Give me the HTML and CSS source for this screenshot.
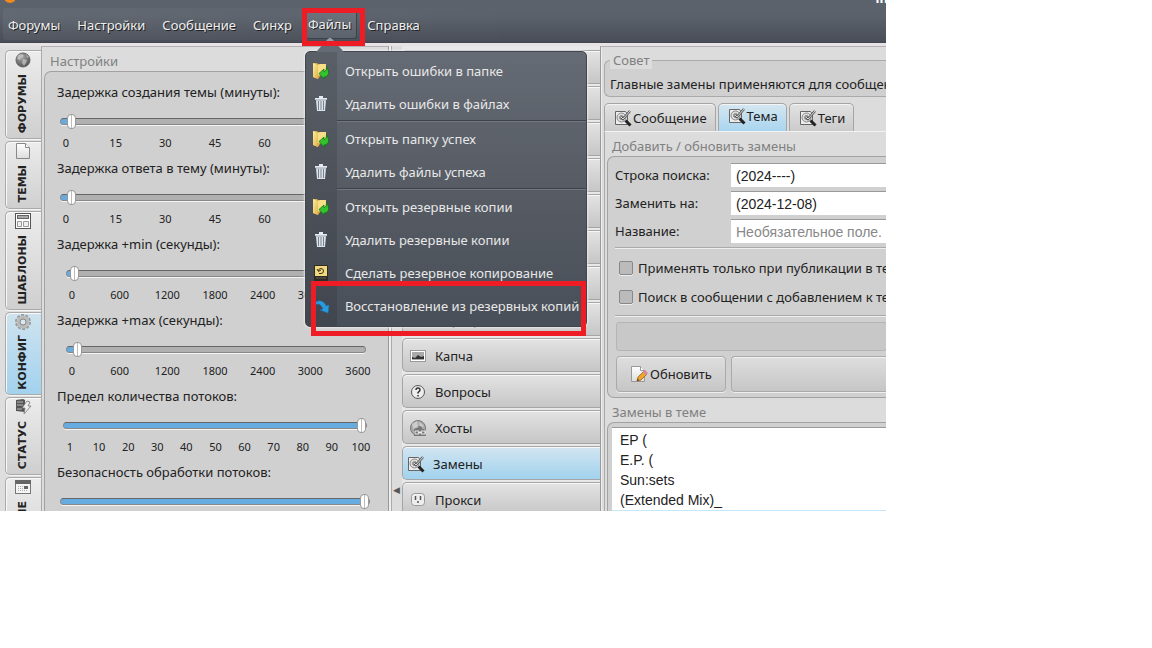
FILE: index.html
```html
<!DOCTYPE html>
<html lang="ru">
<head>
<meta charset="utf-8">
<title>Замены</title>
<link rel="stylesheet" href="styles.css">
</head>
<body>
<svg class="defs" aria-hidden="true">
  <defs>
    <linearGradient id="gold" x1="0" y1="0" x2="1" y2="1"><stop offset="0" stop-color="#ffef9e"/><stop offset="1" stop-color="#dcae45"/></linearGradient>
    <radialGradient id="ball" cx="0.4" cy="0.3" r="0.7"><stop offset="0" stop-color="#aaa"/><stop offset="1" stop-color="#555"/></radialGradient>
    <linearGradient id="paper" x1="0" y1="0" x2="0" y2="1"><stop offset="0" stop-color="#fff"/><stop offset="1" stop-color="#ddd"/></linearGradient>
    <symbol id="folder" viewBox="0 0 18 18">
      <path d="M1 1h4l1 1h8v11l-6 1-2 3-5-2z" fill="#d9ab47"/><path d="M6 3l2-1h6v11H6z" fill="#f7df87"/><path d="M1 1l5 2v14l-5-2z" fill="url(#gold)"/>
      <path d="M7 11.500l5-4.500v2.500q2.500 0 2.500-5 4 7 .5 9.500-1 1-3 1V17z" fill="#35c22f" stroke="#0b7410" stroke-width=".8"/>
    </symbol>
    <symbol id="trash" viewBox="0 0 18 18">
      <path d="M7 1h4v2H7zM3 3h12v2H3z" fill="#e6ebf2"/><path d="M4 5h10l-1 11H5z" fill="#dce2eb"/><path d="M6.500 6v9M9 6v9M11.500 6v9" stroke="#79828f"/><path d="M3 5h12" stroke="#7d8591" stroke-width=".7"/>
    </symbol>
    <symbol id="drive" viewBox="0 0 18 18">
      <rect x="2" y="1" width="14" height="16" rx="1" fill="#2e2c26"/><rect x="3" y="2" width="12" height="10" fill="#f2d97e"/><path d="M7 9.500h2A2.500 2.500 0 1 0 6.500 7M5 5l1.500 2.500L9 6" fill="none" stroke="#3e3517"/><path d="M4 14h10" stroke="#625f57"/>
    </symbol>
    <symbol id="restore" viewBox="0 0 18 18">
      <path d="M1 9Q4 3 9 4q4 1 5 5l3-1-1 8-8-3 3-1Q9 7 6 7 3 7 1 9z" fill="#2b9bdf" stroke="#1877b7" stroke-width=".6"/>
    </symbol>
    <symbol id="globe" viewBox="0 0 18 18">
      <circle cx="9" cy="9" r="7" fill="url(#ball)" stroke="#666"/><path d="M4 4l4-1 2 2-3 2-1 2-3-1zM9 8l4 1-1 3-2 3-2-3zM12 3l3 3-2 1z" fill="#d5d5d5" opacity=".6"/>
    </symbol>
    <symbol id="page" viewBox="0 0 18 18">
      <path d="M2.500 1.500h9l4 4v11h-13z" fill="url(#paper)" stroke="#888"/><path d="M11.500 1.500v4h4" fill="#fff" stroke="#888"/>
    </symbol>
    <symbol id="template" viewBox="0 0 18 18">
      <rect x="1.500" y="1.500" width="15" height="15" fill="#fff" stroke="#555"/><rect x="3.500" y="3.500" width="11" height="3" fill="#aaa" stroke="#666"/><path d="M3.500 9.500h4v5h-4zM9.500 9.500h5v5h-5z" fill="#eee" stroke="#999"/>
    </symbol>
    <symbol id="gear" viewBox="0 0 18 18">
      <circle cx="9" cy="9" r="7" fill="none" stroke="#999" stroke-width="2" stroke-dasharray="3 1.400"/><circle cx="9" cy="9" r="4.500" fill="#d8e7f0" stroke="#bbb" stroke-width="4"/><circle cx="9" cy="9" r="3" fill="#d8e7f0" stroke="#888"/>
    </symbol>
    <symbol id="status" viewBox="0 0 18 18">
      <path d="M2 2l7-1 2 1v12l-9-1z" fill="#555"/><path d="M3 4h6M3 7h6M3 11h5" stroke="#bbb"/><path d="M13 3l3 1-2 4h3l-7 8 1-6H8z" fill="#eee" stroke="#777" stroke-width=".8"/>
    </symbol>
    <symbol id="calendar" viewBox="0 0 18 18">
      <rect x="1.500" y="2.500" width="15" height="13" fill="#f5f5f5" stroke="#777"/><path d="M1 2h16v4H1z" fill="#666"/><path d="M4 8.500h10M4 10.500h10M4 12.500h10" stroke="#aaa" stroke-dasharray="1 1"/><path d="M10 8h4v3h-4z" fill="#666"/>
    </symbol>
    <symbol id="image" viewBox="0 0 18 18">
      <rect x="1.500" y="3.500" width="15" height="11" fill="#fff" stroke="#999"/><path d="M3 5h12v8H3z" fill="#aaa"/><path d="M3 12v-2l3 1 3-3 3 2 3-1v3z" fill="#333"/>
    </symbol>
    <symbol id="question" viewBox="0 0 18 18">
      <circle cx="9" cy="9" r="6.500" fill="#eee" stroke="#555"/><path d="M7 7q0-2 2-2t2 2q0 1-2 2.500v1M9 12v1.500" fill="none" stroke="#333" stroke-width="1.500"/>
    </symbol>
    <symbol id="hosts" viewBox="0 0 18 18">
      <circle cx="9" cy="9" r="7.500" fill="#aaa" stroke="#777"/><path d="M3 5l5-3 1 5-4 4zM10 3l5 4-4 2z" fill="#ccc"/><path d="M5 11q0-2 2-2h2q0-2 2-2t2 3h2l2 7H5z" fill="#777"/><path d="M6 12h4v3H6zM12 12h4v3h-4zM9 13.500h4" fill="none" stroke="#eee"/>
    </symbol>
    <symbol id="replace" viewBox="0 0 18 18">
      <path d="M1.500 2.500h10l2 3v10h-12z" fill="#ededed" stroke="#666"/><circle cx="7.500" cy="8.500" r="4.500" fill="#ddd" stroke="#888"/><circle cx="7.500" cy="8.500" r="2" fill="#bbb" stroke="#888"/><path d="M7 8l2 2 7-8" fill="none" stroke="#555" stroke-width="2.500"/><path d="M7 8l2 2 7-8" fill="none" stroke="#ddd"/><path d="M11.500 11.500l5 5" stroke="#222" stroke-width="3"/>
    </symbol>
    <symbol id="proxy" viewBox="0 0 18 18">
      <rect x="2.500" y="2.500" width="13" height="12" rx="3" fill="#eee" stroke="#999"/><path d="M6.500 5v4M11.500 5v4M9 10v2" stroke="#555" stroke-width="1.500"/>
    </symbol>
    <symbol id="edit" viewBox="0 0 18 18">
      <path d="M1.500 1.500h9l4 4v11h-13z" fill="url(#paper)" stroke="#999"/><path d="M10.500 1.500v4h4" fill="#fff" stroke="#999"/><path d="M7 16l1-4 6-6 3 3-6 6z" fill="#f0a52c" stroke="#93601a" stroke-width=".8"/><path d="M13 7l2-2 3 3-2 2z" fill="#d285ae"/><path d="M7 16l1-2 1 1z" fill="#222"/>
    </symbol>
  </defs>
</svg>
<div class="screen">
  <div class="app">
    <header class="topbar">
      <svg class="logo" viewBox="0 0 12 12"><circle cx="6" cy="6" r="6" fill="#f28a1b"/></svg>
      <span class="caption">im</span>
      <nav class="menubar">
        <button class="menu-btn">Форумы</button>
        <button class="menu-btn">Настройки</button>
        <button class="menu-btn">Сообщение</button>
        <button class="menu-btn">Синхр</button>
        <div class="menu-open">
          <button class="menu-btn is-open" aria-expanded="true">Файлы</button>
          <div class="mark mark-menu"></div>
          <div class="dropdown">
            <svg class="notch" viewBox="0 0 28 14"><path d="M0 14L12 1q2-2 4 0l12 13z" fill="#656b74"/><path d="M9 4l3-3q2-2 4 0l3 3z" fill="#9a9fa6"/></svg>
            <div class="dd-group">
              <button class="dd-item"><svg class="icon"><use href="#folder"/></svg>Открыть ошибки в папке</button>
              <button class="dd-item"><svg class="icon"><use href="#trash"/></svg>Удалить ошибки в файлах</button>
            </div>
            <div class="dd-group">
              <button class="dd-item"><svg class="icon"><use href="#folder"/></svg>Открыть папку успех</button>
              <button class="dd-item"><svg class="icon"><use href="#trash"/></svg>Удалить файлы успеха</button>
            </div>
            <div class="dd-group">
              <button class="dd-item"><svg class="icon"><use href="#folder"/></svg>Открыть резервные копии</button>
              <button class="dd-item"><svg class="icon"><use href="#trash"/></svg>Удалить резервные копии</button>
              <button class="dd-item"><svg class="icon"><use href="#drive"/></svg>Сделать резервное копирование</button>
              <button class="dd-item"><svg class="icon"><use href="#restore"/></svg>Восстановление из резервных копий</button>
            </div>
            <div class="mark mark-item"></div>
          </div>
        </div>
        <button class="menu-btn">Справка</button>
      </nav>
    </header>

    <main class="workspace">
      <nav class="rail">
        <button class="rail-tab"><svg class="icon"><use href="#globe"/></svg><span>ФОРУМЫ</span></button>
        <button class="rail-tab"><svg class="icon"><use href="#page"/></svg><span>ТЕМЫ</span></button>
        <button class="rail-tab"><svg class="icon"><use href="#template"/></svg><span>ШАБЛОНЫ</span></button>
        <button class="rail-tab is-active"><svg class="icon"><use href="#gear"/></svg><span>КОНФИГ</span></button>
        <button class="rail-tab"><svg class="icon"><use href="#status"/></svg><span>СТАТУС</span></button>
        <button class="rail-tab"><svg class="icon"><use href="#calendar"/></svg><span>ПРОЧИЕ</span></button>
      </nav>

      <section class="settings">
        <h2 class="title">Настройки</h2>
        <div class="group settings-group">
          <div class="setting short">
            <label for="s1">Задержка создания темы (минуты):</label>
            <input class="slider" id="s1" type="range" min="0" max="100" value="2" style="--fill:3%">
            <div class="ticks"><span>0</span><span>15</span><span>30</span><span>45</span><span>60</span><span>75</span><span>90</span></div>
          </div>
          <div class="setting short">
            <label for="s2">Задержка ответа в тему (минуты):</label>
            <input class="slider" id="s2" type="range" min="0" max="100" value="2" style="--fill:3%">
            <div class="ticks"><span>0</span><span>15</span><span>30</span><span>45</span><span>60</span><span>75</span><span>90</span></div>
          </div>
          <div class="setting wide">
            <label for="s3">Задержка +min (секунды):</label>
            <input class="slider" id="s3" type="range" min="0" max="100" value="1" style="--fill:2%">
            <div class="ticks"><span>0</span><span>600</span><span>1200</span><span>1800</span><span>2400</span><span>3000</span><span>3600</span></div>
          </div>
          <div class="setting wide">
            <label for="s4">Задержка +max (секунды):</label>
            <input class="slider" id="s4" type="range" min="0" max="100" value="2" style="--fill:3%">
            <div class="ticks"><span>0</span><span>600</span><span>1200</span><span>1800</span><span>2400</span><span>3000</span><span>3600</span></div>
          </div>
          <div class="setting limit">
            <label for="s5">Предел количества потоков:</label>
            <input class="slider" id="s5" type="range" min="0" max="100" value="100" style="--fill:99%">
            <div class="ticks"><span>1</span><span>10</span><span>20</span><span>30</span><span>40</span><span>50</span><span>60</span><span>70</span><span>80</span><span>90</span><span>100</span></div>
          </div>
          <div class="setting short">
            <label for="s6">Безопасность обработки потоков:</label>
            <input class="slider" id="s6" type="range" min="0" max="100" value="100" style="--fill:99%">
          </div>
        </div>
      </section>

      <div class="splitter"><span>◀</span></div>

      <nav class="sections">
        <button class="section-btn"></button>
        <button class="section-btn"></button>
        <button class="section-btn"></button>
        <button class="section-btn"></button>
        <button class="section-btn"></button>
        <button class="section-btn"></button>
        <button class="section-btn"></button>
        <button class="section-btn"><svg class="icon"><use href="#image"/></svg>Парсер</button>
        <button class="section-btn"><svg class="icon"><use href="#image"/></svg>Капча</button>
        <button class="section-btn"><svg class="icon"><use href="#question"/></svg>Вопросы</button>
        <button class="section-btn"><svg class="icon"><use href="#hosts"/></svg>Хосты</button>
        <button class="section-btn is-active"><svg class="icon"><use href="#replace"/></svg>Замены</button>
        <button class="section-btn"><svg class="icon"><use href="#proxy"/></svg>Прокси</button>
      </nav>

      <section class="details">
        <fieldset class="tip">
          <legend>Совет</legend>
          <p>Главные замены применяются для сообщений</p>
        </fieldset>
        <div class="tabs" role="tablist">
          <button class="tab" role="tab"><svg class="icon"><use href="#replace"/></svg>Сообщение</button>
          <button class="tab is-active" role="tab" aria-selected="true"><svg class="icon"><use href="#replace"/></svg>Тема</button>
          <button class="tab" role="tab"><svg class="icon"><use href="#replace"/></svg>Теги</button>
        </div>
        <div class="tab-page">
          <h2 class="title">Добавить / обновить замены</h2>
          <div class="group form">
            <div class="field"><label for="f1">Строка поиска:</label><input id="f1" type="text" value="(2024----)"></div>
            <div class="field"><label for="f2">Заменить на:</label><input id="f2" type="text" value="(2024-12-08)"></div>
            <div class="field"><label for="f3">Название:</label><input id="f3" type="text" placeholder="Необязательное поле."></div>
            <div class="checks">
              <label class="check"><input type="checkbox">Применять только при публикации в теме</label>
              <label class="check"><input type="checkbox">Поиск в сообщении с добавлением к теме</label>
            </div>
            <button class="blank" disabled aria-label="Добавить"></button>
            <div class="actions">
              <button class="push"><svg class="icon"><use href="#edit"/></svg>Обновить</button>
              <button class="push grow" aria-label="Удалить"></button>
            </div>
          </div>
          <h2 class="title">Замены в теме</h2>
          <div class="group list-group">
            <ul class="list"><li>EP (</li><li>E.P. (</li><li>Sun:sets</li><li>(Extended Mix)_</li><li class="is-selected">&nbsp;</li></ul>
          </div>
        </div>
      </section>
    </main>
  </div>
</div>
</body>
</html>
```
FILE: styles.css
```css
* { box-sizing: border-box; }
body {
  margin: 0;
  background: #fff;
  color: #222;
  font: 13px/20px "Noto Sans", "Open Sans", sans-serif;
}
button, input { font: inherit; color: inherit; }
button { border: 0; padding: 0; background: none; text-align: left; white-space: nowrap; }
h2, p, ul { margin: 0; padding: 0; font-size: inherit; font-weight: normal; }
.defs { position: absolute; width: 0; height: 0; }
.icon { width: 18px; height: 18px; flex: none; }

.screen {
  display: grid;
  grid-template: minmax(0, 56fr) 15fr / minmax(0, 10fr) 3fr;
  height: 100vh;
}
.app { position: relative; display: flex; flex-direction: column; overflow: hidden; background: #dcdcdc; }

/* top bar */
.topbar {
  flex: none;
  padding: 8px 3px 2px;
  background: linear-gradient(#5c636d, #5b616b 40%, #484d57);
  border-bottom: 1px solid #41454e;
  position: relative;
  z-index: 2;
}
.logo { position: absolute; left: 4px; top: -9px; width: 12px; height: 12px; }
.caption { position: absolute; right: -6px; top: -12px; color: #fff; font-weight: bold; }
.menubar { display: flex; height: 32px; background: linear-gradient(90deg, #ffffff0c, #ffffff00 60%); border-radius: 3px; }
.menu-btn { height: 32px; padding: 2px 5px 0; margin-right: 7px; color: #eee; text-shadow: 1px 1px 0 #222; }
.menu-open { position: relative; }
.menu-btn.is-open { height: 31px; padding-left: 4px; margin-right: 5px; background: linear-gradient(#70767f, #5c626b); border-right: 1px solid #3d424a; border-bottom: 1px solid #3d424a; border-radius: 3px; }
.mark { position: absolute; border: 5px solid #ee1c24; pointer-events: none; }
.mark-menu { left: -2px; right: -3px; top: 0; height: 38px; z-index: 2; }
.dropdown {
  position: absolute;
  left: 1px;
  top: 43px;
  width: 282px;
  padding: 2px 0 4px;
  border: 1px solid #42474f;
  border-radius: 5px;
  background: linear-gradient(90deg, #0000001c 31px, transparent 31px), linear-gradient(#656b74, #565b64 50%, #494f58);
  box-shadow: 0 0 2px 1px #eeec;
}
.notch { position: absolute; left: 10px; top: -14px; width: 28px; height: 14px; }
.dd-group + .dd-group { margin-left: 31px; border-top: 1px solid #3e434b; box-shadow: inset 0 1px #72777e; padding-top: 1px; }
.dd-group + .dd-group .dd-item { margin-left: -31px; }
.dd-item { display: flex; align-items: center; gap: 15px; height: 33px; padding-left: 6px; color: #e8e8e8; }
.mark-item { left: 5px; right: 0; top: 229px; height: 55px; }

/* body */
.workspace { flex: 1; min-height: 0; display: flex; border-top: 3px solid #e6e2e6; background: #dcdcdc; }
.rail { width: 41px; flex: none; display: flex; flex-direction: column; gap: 2px; padding: 4px 0 0 5px; background: #dedede; }
.rail-tab {
  flex: none;
  display: flex;
  flex-direction: column;
  align-items: center;
  gap: 5px;
  padding: 0 2px 5px 0;
  border: 1px solid #aaa;
  border-right: 0;
  border-radius: 5px 0 0 5px;
  background: linear-gradient(#ececec, #cfcfcf);
  font: bold 11px/14px "DejaVu Sans", sans-serif;
  box-shadow: inset 1px 1px #f8f8f8, 0 1px #f4f4f4;
}
.rail-tab span { writing-mode: vertical-rl; transform: rotate(180deg); }
.rail-tab.is-active { gap: 4px; padding-bottom: 4px; background: linear-gradient(#cfe3ef, #a3d2ee); }

.settings { flex: 0 0 347px; padding: 4px 0 0 2px; border-left: 1px solid #aaa; border-top: 1px solid #b5b0b5; background: #dcdcdc; }
.title { padding-left: 6px; color: #808080; }
.group { border: 1px solid #a2a2a2; border-radius: 7px; background: #d0d0d0; }
.settings-group { border-right: 0; border-radius: 7px 0 0 0; padding: 10px 0 0 12px; }
.setting { height: 76px; }
.setting label { display: block; }
.slider {
  appearance: none;
  display: block;
  height: 7px;
  margin: 16px 0 0 3px;
  width: 310px;
  border: 1px solid #888;
  border-top-color: #666;
  border-radius: 4px;
  background: linear-gradient(90deg, #66ace0 var(--fill), #b0b0b0 var(--fill));
  box-shadow: 0 1px #f4f4f4;
}
.slider::-webkit-slider-thumb {
  appearance: none;
  width: 9px;
  height: 15px;
  border: 1px solid #999;
  border-radius: 4px;
  background: linear-gradient(90deg, #fff 3px, #bbb 3px, #bbb 4px, #fff 4px);
}
.wide .slider { margin-left: 9px; width: 300px; }
.limit .slider { margin-left: 6px; width: 304px; }
.ticks { display: flex; justify-content: space-between; padding-top: 8px; font-size: 11px; line-height: 20px; }
.ticks span { width: 0; display: flex; justify-content: center; }
.short .ticks { margin: 0 24px 0 9px; }
.wide .ticks { margin: 0 30px 0 15px; }
.limit .ticks { margin: 0 27px 0 13px; }

.splitter { flex: none; width: 14px; padding: 438px 0 0 4px; border-left: 1px solid #999; box-shadow: inset 2px 0 #eee, inset 3px 0 #aaa; background: #dcdcdc; font: 9px/12px "DejaVu Sans", sans-serif; color: #555; }

.sections { flex: none; width: 198px; display: flex; flex-direction: column; gap: 2px; padding-top: 4px; background: #e8e8e8; }
.section-btn {
  flex: none;
  display: flex;
  align-items: center;
  gap: 8px;
  height: 34px;
  padding: 1px 0 0 6px;
  border: 1px solid #a5a5a5;
  border-right: 0;
  border-radius: 5px 0 0 5px;
  background: linear-gradient(#e3e3e3, #c6c6c6);
  box-shadow: inset 0 1px #f8f8f8;
}
.section-btn.is-active { padding-left: 4px; background: linear-gradient(#d2e5f0, #a2d2ee); }

.details { flex: 1; min-width: 0; padding: 4px 0 0 3px; border-left: 1px solid #999; border-top: 1px solid #b5b0b5; box-shadow: inset 1px 0 #eee; white-space: nowrap; overflow: hidden; }
.tip { min-width: 0; margin: 0; height: 46px; padding: 6px 0 0 5px; border: 1px solid #aaa; border-right: 0; border-radius: 6px 0 0 6px; background: #d0d0d0; }
.tip legend { height: 18px; line-height: 18px; padding: 0 3px; color: #808080; background: #dcdcdc; }
.tip p { line-height: 18px; }
.tabs { display: flex; align-items: flex-end; gap: 2px; height: 34px; padding-top: 6px; }
.tab { display: flex; align-items: center; gap: 1px; height: 28px; padding: 1px 8px 0 9px; border: 1px solid #a5a5a5; border-bottom: 0; border-radius: 5px 5px 0 0; background: linear-gradient(#e2e2e2, #cbcbcb); box-shadow: inset 0 1px #f4f4f4; }
.tab.is-active { padding: 0 8px 3px 9px; background: linear-gradient(#d5e7f1, #a9d5ef); }
.tab-page { border-top: 1px solid #f2f2f2; border-left: 1px solid #aaa; padding: 4px 0 0 2px; }
.tab-page .title { padding-left: 5px; }
.form { border-right: 0; border-radius: 7px 0 0 7px; padding: 6px 0 5px 7px; margin-bottom: 4px; }
.field { display: flex; align-items: center; padding-bottom: 4px; }
.field label { flex: 0 0 116px; }
.field input { flex: 1; min-width: 0; height: 24px; padding: 0 5px; border: 0; border-top: 1px solid #999; background: #fff; color: #222; font: 14px/22px "Liberation Sans", Arial, sans-serif; }
.field input::placeholder { color: #888; opacity: 1; }
.checks { display: flex; flex-direction: column; gap: 9px; padding: 10px 0 8px 4px; border-top: 1px solid #aaa; border-bottom: 1px solid #aaa; box-shadow: inset 0 1px #eee, 0 1px #eee; }
.check { display: flex; align-items: center; gap: 5px; }
.check input { appearance: none; flex: none; width: 14px; height: 14px; margin: 0; border: 1px solid #888; border-radius: 2px; background: #bbb; box-shadow: 0 1px #eee; }
.blank { display: block; width: 100%; height: 29px; margin: 6px 0 5px 1px; border: 1px solid #b5b5b5; border-radius: 3px; background: #c8c8c8; }
.actions { display: flex; gap: 5px; padding-left: 1px; }
.push { display: flex; align-items: center; gap: 2px; height: 36px; padding: 0 13px; border: 1px solid #aaa; border-radius: 4px; background: linear-gradient(#dedede, #c6c6c6); box-shadow: inset 0 1px #f2f2f2, 0 1px #eee; }
.push.grow { flex: 1; border-right: 0; border-radius: 4px 0 0 4px; }
.list-group { border-right: 0; border-bottom: 0; border-radius: 7px 0 0 0; padding: 4px 0 0 4px; }
.list { list-style: none; padding: 2px 8px 0; background: #fff; border-top: 1px solid #999; font: 14px/20px "Liberation Sans", Arial, sans-serif; }
.list li { margin: 0 -8px; padding: 0 8px; }
.list .is-selected { background: #c5e7fa; }
```
